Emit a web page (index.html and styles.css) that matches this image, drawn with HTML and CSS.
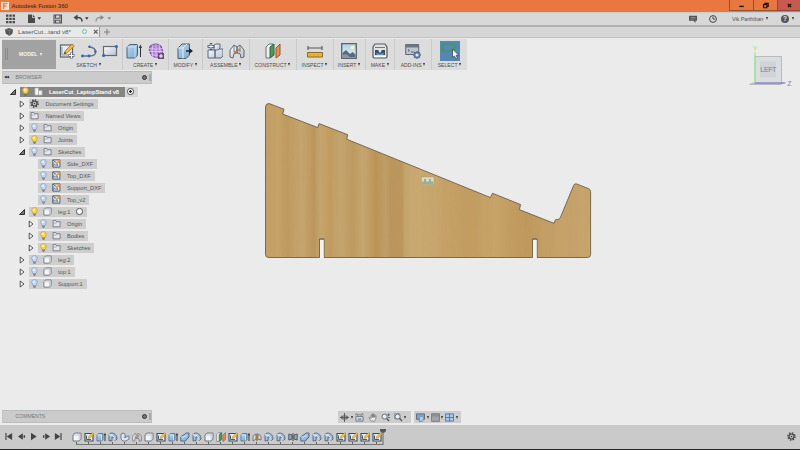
FILE: index.html
```html
<!DOCTYPE html>
<html lang="en">
<head>
<meta charset="utf-8">
<title>Autodesk Fusion 360</title>
<link rel="stylesheet" href="styles.css">
</head>
<body>
<svg class="defs" width="0" height="0" aria-hidden="true">
  <defs>
    <linearGradient id="blue" x1="0" y1="0" x2="1" y2="1"><stop offset="0" stop-color="#b5d6f0"/><stop offset="1" stop-color="#7fa9cf"/></linearGradient>
    <linearGradient id="pale" x1="0" y1="0" x2="1" y2="1"><stop offset="0" stop-color="#fafbfd"/><stop offset="1" stop-color="#b9c3d2"/></linearGradient>
    <linearGradient id="sky" x1="0" y1="0" x2="0" y2="1"><stop offset="0" stop-color="#a9d3ea"/><stop offset="1" stop-color="#eef3ee"/></linearGradient>
  </defs>
  <symbol id="i-sketch" viewBox="0 0 16 16"><rect x="1.500" y="2" width="12" height="12" fill="#e9edf2" stroke="#59616c" stroke-width="1.200"/><path d="M3 12V4M3 12h9" stroke="#8593a5" fill="none"/><path d="M5 11l1-3 7-7 2.300 2-7 7z" fill="#f0b93a" stroke="#82601c" stroke-width=".6"/><path d="M5 11l1-2 1.500 1.300z" fill="#333"/><path d="M12.500 9.500v6M9.500 12.500h6" stroke="#5b6370" stroke-width="2.600"/><path d="M12.500 10v5M10 12.500h5" stroke="#fff" stroke-width="1.200"/></symbol>
  <symbol id="i-line" viewBox="0 0 16 16"><path d="M1 13h8c8 0 7-8 0-9" fill="none" stroke="#68727d" stroke-width="1.400"/><g fill="#3167c4"><circle cx="1.400" cy="13" r="1.400"/><circle cx="8" cy="13" r="1.400"/><circle cx="14.400" cy="8.500" r="1.300"/><circle cx="8.500" cy="3.800" r="1.300"/></g></symbol>
  <symbol id="i-rect" viewBox="0 0 16 16"><rect x="1.500" y="3.500" width="13" height="9" fill="url(#pale)" stroke="#616973" stroke-width="1.200"/><circle cx="1.600" cy="12.500" r="1.600" fill="#3167c4"/><circle cx="14.400" cy="3.500" r="1.600" fill="#3167c4"/></symbol>
  <symbol id="i-extrude" viewBox="0 0 16 16"><path d="M1 4l3-2.500h7.500V12l-2.500 3H1z" fill="url(#blue)" stroke="#4c6480"/><path d="M1 4h8v11M9 4l2.500-2.500" fill="none" stroke="#dcecf8" stroke-width=".8"/><path d="M14.500 14V3" stroke="#333"/><path d="M12.800 5l1.700-3.500L16 5z" fill="#333"/></symbol>
  <symbol id="i-form" viewBox="0 0 16 16"><path d="M2 3q6-4 11 0 3 5 1 9-5 5-11 0-3-5-1-9z" fill="#b07fd6" stroke="#774a9c"/><path d="M5 1.500q-2 6 0 13M8 1v14M11 1.500q2 6 0 13M1 5.500q7 1.500 14 0M1 8.500h14M1 11.500q7 1.500 13 0" fill="none" stroke="#ead9f7" stroke-width=".7"/><path d="M10 10h6v6h-6z" fill="#654f79"/><path d="M13 11v4M11 13h4" stroke="#fff"/></symbol>
  <symbol id="i-modify" viewBox="0 0 16 16"><path d="M1 5l4-4h7.500v11L9 15.500H1z" fill="url(#blue)" stroke="#4b5c70"/><path d="M1 5h5v10.500M6 5l4-4" fill="none" stroke="#e8f4fc"/><path d="M9 8h4" stroke="#222" stroke-width="1.500"/><path d="M12 5l4 3-4 3z" fill="#222"/></symbol>
  <symbol id="i-component" viewBox="0 0 16 16"><path d="M1 7h7v8H1zM8 8l2-2h6v7l-2 2H8z" fill="url(#pale)" stroke="#596b80"/><path d="M7 2l2-1h4v4l-2 2H7z" fill="url(#pale)" stroke="#596b80"/><path d="M4 0v7M.5 3.500h7" stroke="#335c91" stroke-width="2.400"/><path d="M4 1v5M1.500 3.500h5" stroke="#fff" stroke-width=".9"/></symbol>
  <symbol id="i-joint" viewBox="0 0 16 16"><path d="M1 14V7l4-5 3 2v6l-3 .5L4 15zM15 14V7l-4-5-3 2v6l3 .5 1 4.500z" fill="url(#pale)" stroke="#5e6671"/><path d="M5 3v6M11 3v6" stroke="#73808e"/><circle cx="6" cy="9" r="1.300" fill="#e77b36"/><circle cx="10" cy="7" r="1.300" fill="#e77b36"/></symbol>
  <symbol id="i-plane" viewBox="0 0 16 16"><path d="M1 4l3-3h4v11l-3 3H1z" fill="#eef1f3" stroke="#68717a"/><path d="M5 4l4-3v11l-4 3z" fill="#52975b" stroke="#33633a"/><path d="M11 5l4-4v11l-4 3z" fill="#f18c50" stroke="#8d5639"/></symbol>
  <symbol id="i-measure" viewBox="0 0 16 16"><path d="M1 5h14M1 3v4M15 3v4" stroke="#555" fill="none" stroke-width="1.100"/><path d="M.5 9.500h15v4.500H.5z" fill="#efbd32" stroke="#8b671b"/><path d="M3 11v2M5 11v1M7 11v2M9 11v1M11 11v2M13 11v1" stroke="#a17823" stroke-width=".5"/></symbol>
  <symbol id="i-image" viewBox="0 0 16 16"><path d="M.7.7h14.600v14.600H.7z" fill="url(#sky)" stroke="#59646f" stroke-width="1.300"/><circle cx="11.500" cy="4.500" r="1.800" fill="#fff6b4"/><path d="M1.500 10L5 7l4 4 2.500-2 3 2.500v3h-13z" fill="#58697a"/><path d="M1.500 12l4-1 4 3.500h-8z" fill="#8797a4"/></symbol>
  <symbol id="i-make" viewBox="0 0 16 16"><path d="M3 1h10l2 3v10l-1 1H2l-1-1V4z" fill="#dfe3e6" stroke="#565c63" stroke-width="1.200"/><path d="M3 4.500h10" stroke="#777"/><path d="M3 7h10v5H3z" fill="#414a55"/><path d="M7 5h2l.6 3L8 10 6.400 8z" fill="#d9e7f4"/><path d="M4.500 9.500L8 11l3.500-1.500V12h-7z" fill="#5599d3"/><path d="M2 13.500h12" stroke="#fff"/></symbol>
  <symbol id="i-addins" viewBox="0 0 16 16"><path d="M.7 1.500h13v10H.7z" fill="#bdc5cf" stroke="#5e6876"/><path d="M.7 1.500h13v3H.7z" fill="#6c7684"/><path d="M3 6.500l1.500 1L3 8.500M6 9h3" fill="none" stroke="#46515f" stroke-width=".8"/><circle cx="12" cy="12" r="2.500" fill="#dfeaf4" stroke="#5b789c" stroke-width="1.800"/><path d="M12 8v1.500M12 14.500V16M8 12h1.500M14.500 12H16M9.200 9.200l1 1M13.800 13.800l1 1M14.800 9.200l-1 1M10.200 13.800l-1 1" stroke="#5b789c" stroke-width="1.300"/></symbol>
  <symbol id="i-select" viewBox="0 0 20 20"><path d="M2.500 3h12v7h-12z" fill="none" stroke="#3e9a50" stroke-width="1.200"/><path d="M12.500 8v8.500l2-1.500 1.400 3 1.600-.8-1.400-2.900 2.500-.3z" fill="#fff" stroke="#394955" stroke-width=".8"/></symbol>
  <symbol id="i-bulb" viewBox="0 0 10 10"><path d="M3.300 7.500C3.300 6 1.900 5.400 1.900 3.600a3.100 3.100 0 0 1 6.200 0C8.100 5.400 6.700 6 6.700 7.500z" fill="#c2d6f3" stroke="#8da1c0" stroke-width=".8"/><circle cx="4.200" cy="3.200" r="1.200" fill="#edf5ff"/><path d="M3.400 8h3.200M4 9.300h2" stroke="#6b7480" stroke-width="1"/></symbol>
  <symbol id="i-bulb-on" viewBox="0 0 10 10"><path d="M3.300 7.500C3.300 6 1.900 5.400 1.900 3.600a3.100 3.100 0 0 1 6.200 0C8.100 5.400 6.700 6 6.700 7.500z" fill="#f8d64b" stroke="#c3a542" stroke-width=".8"/><circle cx="4.200" cy="3.200" r="1.200" fill="#fff6bb"/><path d="M3.400 8h3.200M4 9.300h2" stroke="#666" stroke-width="1"/></symbol>
  <symbol id="i-folder" viewBox="0 0 10 10"><path d="M1.200 8.700V1.700h3l.8 1.300h4v5.700z" fill="#e4e7ec" stroke="#68707b" stroke-width=".9"/><path d="M1.200 4.500h3.500l.8-1" stroke="#8e96a1" stroke-width=".7" fill="none"/></symbol>
  <symbol id="i-box" viewBox="0 0 10 10"><path d="M1 3l1.800-1.900H9v6L7.200 9H1z" fill="#f5f6f7" stroke="#626a75" stroke-width=".9" stroke-linejoin="round"/><path d="M1.500 3h5.700v5.500M7.200 3L9 1.400" fill="none" stroke="#b3b8bf" stroke-width=".7"/></symbol>
  <symbol id="i-parts" viewBox="0 0 10 10"><path d="M1 1h4v8H1zM5 4h4v5H5z" fill="#f4f4f4" stroke="#a9a9a9" stroke-width=".7"/></symbol>
  <symbol id="i-gear" viewBox="0 0 10 10"><circle cx="5" cy="5" r="4" fill="none" stroke="#444" stroke-width="1.600" stroke-dasharray="1.570 1.570"/><circle cx="5" cy="5" r="2.800" fill="#c2c2c2" stroke="#444" stroke-width="1.300"/><circle cx="5" cy="5" r=".9" fill="#444"/></symbol>
  <symbol id="i-dxf" viewBox="0 0 10 10"><path d="M.8 1h8v8h-8z" fill="#e7edf3" stroke="#46505e" stroke-width="1"/><path d="M2 8V5l2 2 2-1v2M2 3h2" stroke="#4f6c91" fill="none"/><path d="M4 6l.6-2L8 .7l1.500 1.400L6 5.400z" fill="#ec993c"/><path d="M1 1l3 3" stroke="#cb4d3b"/></symbol>
  <symbol id="t-sketch" viewBox="0 0 10 10"><path d="M1 1.500h8V9H1z" fill="#e5ebf1" stroke="#414c5c" stroke-width="1.100"/><path d="M2.500 3.500v4H7" stroke="#425f83" fill="none"/><path d="M4 6.500l.7-2L8.500.7 10 2 6 6z" fill="#f5c62d" stroke="#9c7720" stroke-width=".4"/></symbol>
  <symbol id="t-extrude" viewBox="0 0 10 10"><path d="M1 3l1.500-1.500H7v6L5.500 9H1z" fill="url(#blue)" stroke="#506782" stroke-width=".8"/><path d="M1 3h4.500v5.500" fill="none" stroke="#e7f2fc" stroke-width=".7"/><path d="M9 9V2" stroke="#333"/><path d="M7.700 3.200L9 .8l1 2.400z" fill="#333"/></symbol>
  <symbol id="t-fillet" viewBox="0 0 10 10"><path d="M1 8.800V2.500L3 1c4 0 6 2.500 6 6L7.200 8.800C7.200 6 6 5 4 5v3.800z" fill="url(#blue)" stroke="#50627b" stroke-width=".9"/><path d="M1 2.800c4 0 6 2 6.200 5.500" fill="none" stroke="#f1f7fe"/></symbol>
  <symbol id="t-revolve" viewBox="0 0 10 10"><path d="M1 2l2-1 2 1v2.500L9 4v3L6 9H3L1 7z" fill="#dce4ec" stroke="#59697c" stroke-width=".8"/><path d="M4 5.500h2L7.500 4" fill="none" stroke="#6c91b8"/></symbol>
  <symbol id="t-combine" viewBox="0 0 10 10"><path d="M.8 5L3 3h1l2-2h3v4L7 7 5.500 9H.8z" fill="url(#blue)" stroke="#466080" stroke-width=".9"/><path d="M1 5h3l1-1h2" fill="none" stroke="#d3e7f8" stroke-width=".8"/></symbol>
  <symbol id="t-redjoint" viewBox="0 0 10 10"><path d="M1 4l3-2v5L1 9zM6 2l3 2v4L6 7z" fill="#d9dedb" stroke="#5b685f" stroke-width=".8"/><path d="M4 3l2-1v6l-2 1z" fill="#dc7652"/><path d="M5 1v8" stroke="#427a4d" stroke-width=".6"/></symbol>
  <symbol id="t-mirror" viewBox="0 0 10 10"><path d="M.8 2L4 3v4L.8 8zM9.200 2L6 3v4l3.200 1z" fill="#8fa9c2" stroke="#445160" stroke-width=".9"/><path d="M5 1v8" stroke="#444"/></symbol>
  <symbol id="i-zoom" viewBox="0 0 10 10"><circle cx="4" cy="4" r="2.800" fill="#e8eef2" stroke="#65717e" stroke-width="1.100"/><path d="M6.200 6.200L9 9" stroke="#555" stroke-width="1.500"/></symbol>
  <symbol id="i-play" viewBox="0 0 10 10"><path d="M2.200 .7L8.500 5 2.200 9.300z" fill="#444"/></symbol>
  <symbol id="i-open" viewBox="0 0 8 8"><path d="M6.500 1.500v5h-5z" fill="#777" stroke="#333"/></symbol>
  <symbol id="i-closed" viewBox="0 0 8 8"><path d="M2.200 1v6l3.800-3z" fill="#f7f7f7" stroke="#444" stroke-width=".9"/></symbol>
</svg>

<div class="app">
  <header class="titlebar">
    <svg class="logo" viewBox="0 0 8 8"><rect width="8" height="8" fill="#f3e6d8"/><path d="M2.500 7V1.500h4M2.500 4h3" stroke="#e48530" stroke-width="1.500" fill="none"/></svg>
    <span class="title">Autodesk Fusion 360</span>
    <div class="window-buttons">
      <span><svg viewBox="0 0 10 10"><path d="M2.500 6h5" stroke="#201008" stroke-width="1.500"/></svg></span>
      <span><svg viewBox="0 0 10 10"><path d="M2.800 4h3.700v3.500H2.800zM4.200 4V2.600H8v3.500H6.500" stroke="#201008" fill="none" stroke-width="1.200"/></svg></span>
      <span class="close"><svg viewBox="0 0 10 10"><path d="M3.200 3.300l3.600 3.600M6.800 3.300L3.200 6.900" stroke="#201008" stroke-width="1.300"/></svg></span>
    </div>
  </header>

  <div class="quickbar">
    <svg class="quick-icons" viewBox="0 0 112 13">
      <path d="M6 2.500h2.400v2.200H6zm3.300 0h2.400v2.200H9.300zm3.300 0H15v2.200h-2.400zM6 5.800h2.400V8H6zm3.300 0h2.400V8H9.300zm3.300 0H15V8h-2.400zM6 9h2.400v2.200H6zm3.300 0h2.400v2.200H9.300zm3.300 0H15v2.200h-2.400z" fill="#4a4a4a"/>
      <path d="M28 2.500h4v3.200h3V11h-7zM32.800 2.500L35 4.900h-2.200z" fill="#4a4a4a"/>
      <path d="M37.500 5.200h3.600l-1.800 2.600zM85 5.200h3.600l-1.800 2.600z" fill="#333"/>
      <path d="M54 3h7.500v8H54zM55.500 3v3.300H60V3M55.500 11V8.300H60V11" fill="none" stroke="#555" stroke-width="1.100"/>
      <path d="M77 5.500q5-.5 5 4" stroke="#444" stroke-width="1.600" fill="none"/><path d="M73.500 5.500L77.500 2.500v6z" fill="#444"/>
      <path d="M101 5.500q-5-.5-5 4" stroke="#999" stroke-width="1.500" fill="none"/><path d="M104 5.500L100.500 3v5zM107.500 5.200h3.600l-1.800 2.600z" fill="#888"/>
    </svg>
    <div class="account">
      <svg viewBox="0 0 8 8"><path d="M0 .8h8v5H6.500V8l-2-2.200H0z" fill="#555"/><path d="M1.500 2.500h5M1.500 4h5" stroke="#aaa" stroke-width=".6"/></svg>
      <svg viewBox="0 0 8 8"><circle cx="4" cy="4" r="3.400" fill="none" stroke="#444"/><path d="M4 1.700V4h2" fill="none" stroke="#444"/></svg>
      <span class="user">Vik Parthiban</span><i class="caret"></i>
      <span class="help">?</span><i class="caret"></i>
    </div>
  </div>

  <nav class="tabs">
    <div class="tab">
      <svg class="cube" viewBox="0 0 8 8"><path d="M0 1.500L4 0l4 1.500-.5 4L4.500 8 .7 5.500z" fill="#555"/><path d="M0 1.500l4.500 1L8 1.500M4.500 2.500V8" fill="none" stroke="#888" stroke-width=".6"/></svg>
      <span class="tab-name">LaserCut...tand v8*</span>
      <i class="status"></i>
      <svg class="x" viewBox="0 0 6 6"><path d="M1 1l4 4M5 1L1 5" stroke="#555" stroke-width="1.200"/></svg>
    </div>
    <svg class="plus" viewBox="0 0 6 6"><path d="M3 0v6M0 3h6" stroke="#777" stroke-width=".9"/></svg>
  </nav>

  <main class="stage">
    <section class="ribbon">
      <div class="workspace"><i class="grip"></i><span>MODEL</span><i class="caret"></i></div>
      <div class="group g-sketch"><div class="tools"><svg><use href="#i-sketch"/></svg><svg><use href="#i-line"/></svg><svg><use href="#i-rect"/></svg></div><div class="label">SKETCH<i class="caret"></i></div></div>
      <div class="group g-create"><div class="tools"><svg><use href="#i-extrude"/></svg><svg><use href="#i-form"/></svg></div><div class="label">CREATE<i class="caret"></i></div></div>
      <div class="group g-modify"><div class="tools"><svg><use href="#i-modify"/></svg></div><div class="label">MODIFY<i class="caret"></i></div></div>
      <div class="group g-assemble"><div class="tools"><svg><use href="#i-component"/></svg><svg><use href="#i-joint"/></svg></div><div class="label">ASSEMBLE<i class="caret"></i></div></div>
      <div class="group g-construct"><div class="tools"><svg><use href="#i-plane"/></svg></div><div class="label">CONSTRUCT<i class="caret"></i></div></div>
      <div class="group g-inspect"><div class="tools"><svg><use href="#i-measure"/></svg></div><div class="label">INSPECT<i class="caret"></i></div></div>
      <div class="group g-insert"><div class="tools"><svg><use href="#i-image"/></svg></div><div class="label">INSERT<i class="caret"></i></div></div>
      <div class="group g-make"><div class="tools"><svg><use href="#i-make"/></svg></div><div class="label">MAKE<i class="caret"></i></div></div>
      <div class="group g-addins"><div class="tools"><svg><use href="#i-addins"/></svg></div><div class="label">ADD-INS<i class="caret"></i></div></div>
      <div class="group g-select"><div class="tools"><svg class="active"><use href="#i-select"/></svg></div><div class="label">SELECT<i class="caret"></i></div></div>
    </section>

    <aside class="browser">
      <div class="panel-head"><span class="rewind">◀◀</span><span class="panel-name">BROWSER</span><i class="dot"></i><i class="handle"></i></div>
      <ul class="tree">
        <li class="root"><svg class="toggle"><use href="#i-open"/></svg><div class="item dark"><svg><use href="#i-bulb-on"/></svg><svg class="kind"><use href="#i-parts"/></svg><b>LaserCut_LaptopStand v8</b></div><div class="radio-cell"><i class="radio on"></i></div></li>
        <li><svg class="toggle"><use href="#i-closed"/></svg><div class="item single"><svg><use href="#i-gear"/></svg><span>Document Settings</span></div></li>
        <li><svg class="toggle"><use href="#i-closed"/></svg><div class="item single"><svg><use href="#i-folder"/></svg><span>Named Views</span></div></li>
        <li><svg class="toggle"><use href="#i-closed"/></svg><div class="item"><svg><use href="#i-bulb"/></svg><svg class="kind"><use href="#i-folder"/></svg><span>Origin</span></div></li>
        <li><svg class="toggle"><use href="#i-closed"/></svg><div class="item"><svg><use href="#i-bulb-on"/></svg><svg class="kind"><use href="#i-folder"/></svg><span>Joints</span></div></li>
        <li><svg class="toggle"><use href="#i-open"/></svg><div class="item"><svg><use href="#i-bulb"/></svg><svg class="kind"><use href="#i-folder"/></svg><span>Sketches</span></div></li>
        <li class="leaf"><div class="item"><svg><use href="#i-bulb"/></svg><svg class="kind"><use href="#i-dxf"/></svg><span>Side_DXF</span></div></li>
        <li class="leaf"><div class="item"><svg><use href="#i-bulb"/></svg><svg class="kind"><use href="#i-dxf"/></svg><span>Top_DXF</span></div></li>
        <li class="leaf"><div class="item"><svg><use href="#i-bulb"/></svg><svg class="kind"><use href="#i-dxf"/></svg><span>Support_DXF</span></div></li>
        <li class="leaf"><div class="item"><svg><use href="#i-bulb"/></svg><svg class="kind"><use href="#i-dxf"/></svg><span>Top_v2</span></div></li>
        <li><svg class="toggle"><use href="#i-open"/></svg><div class="item"><svg><use href="#i-bulb-on"/></svg><svg class="kind"><use href="#i-box"/></svg><span>leg:1</span><i class="radio"></i></div></li>
        <li class="sub"><svg class="toggle"><use href="#i-closed"/></svg><div class="item"><svg><use href="#i-bulb"/></svg><svg class="kind"><use href="#i-folder"/></svg><span>Origin</span></div></li>
        <li class="sub"><svg class="toggle"><use href="#i-closed"/></svg><div class="item"><svg><use href="#i-bulb-on"/></svg><svg class="kind"><use href="#i-folder"/></svg><span>Bodies</span></div></li>
        <li class="sub"><svg class="toggle"><use href="#i-closed"/></svg><div class="item"><svg><use href="#i-bulb-on"/></svg><svg class="kind"><use href="#i-folder"/></svg><span>Sketches</span></div></li>
        <li><svg class="toggle"><use href="#i-closed"/></svg><div class="item"><svg><use href="#i-bulb"/></svg><svg class="kind"><use href="#i-box"/></svg><span>leg:2</span></div></li>
        <li><svg class="toggle"><use href="#i-closed"/></svg><div class="item"><svg><use href="#i-bulb"/></svg><svg class="kind"><use href="#i-box"/></svg><span>top:1</span></div></li>
        <li><svg class="toggle"><use href="#i-closed"/></svg><div class="item"><svg><use href="#i-bulb"/></svg><svg class="kind"><use href="#i-box"/></svg><span>Support:1</span></div></li>
      </ul>
    </aside>

    <svg class="model" viewBox="260 98 336 164">
      <defs>
        <linearGradient id="wood" gradientUnits="userSpaceOnUse" x1="265" y1="0" x2="591" y2="0">
          <stop offset="0" stop-color="#c6a063"/><stop offset=".04" stop-color="#c5a268"/><stop offset=".07" stop-color="#bf9a60"/><stop offset=".11" stop-color="#c7a770"/><stop offset=".15" stop-color="#bb965c"/><stop offset=".17" stop-color="#c7a76f"/><stop offset=".2" stop-color="#c19b5f"/><stop offset=".23" stop-color="#c4a66f"/><stop offset=".27" stop-color="#bd9a60"/><stop offset=".3" stop-color="#c6a670"/><stop offset=".34" stop-color="#bb9358"/><stop offset=".37" stop-color="#c09f67"/><stop offset=".385" stop-color="#bb965c"/><stop offset=".42" stop-color="#bb965d"/><stop offset=".43" stop-color="#c8a870"/><stop offset=".5" stop-color="#c9a970"/><stop offset=".56" stop-color="#c7a266"/><stop offset=".63" stop-color="#c49d60"/><stop offset=".7" stop-color="#c8a468"/><stop offset=".8" stop-color="#c0985c"/><stop offset=".88" stop-color="#c6a167"/><stop offset="1" stop-color="#c7a56d"/>
        </linearGradient>
        <filter id="grain" x="0" y="0" width="100%" height="100%"><feTurbulence type="fractalNoise" baseFrequency=".13 .003" numOctaves="3" seed="7"/><feColorMatrix values="0 0 0 0 .5  0 0 0 0 .33  0 0 0 0 .14  2 0 0 0 -.85"/></filter>
        <path id="side" d="M265.500 107q0-3.500 3.500-3.500l15 5.700-1.300 4.900 35 13.400 1.400-3.900 28.600 11.100-1 4.500L490.300 197.500l2.200-4.200 28 11.200-1 5.200L554 223.300l1.500-3.600 2.500-.2q1.700-.4 2.600-2.500l13-31.500q.9-2.300 3-1.600l12 4.800q2 .8 2 3v62.800q0 3-3 3H537v-18.500h-4.500v18.500H324v-18.500h-4.500v18.500H268.500q-3 0-3-3z"/>
        <clipPath id="cut"><use href="#side"/></clipPath>
      </defs>
      <use href="#side" fill="url(#wood)"/>
      <g clip-path="url(#cut)"><rect x="265" y="103" width="327" height="156" filter="url(#grain)" opacity=".38"/></g>
      <use href="#side" fill="none" stroke="#5e533e" stroke-width=".8"/>
      <path d="M320 258V239.600h3.600V258M533 258V239.600h3.600V258" fill="#f2f2f2"/>
      <path d="M319.500 239.200h4.500M532.500 239.200h4.500" stroke="#5e533e" stroke-width=".8"/>
      <rect x="421.500" y="177" width="12.500" height="7.500" fill="#e2d8be" stroke="#a79a77" stroke-width=".5"/>
      <path d="M422 184v-2.500h2V179h2v2.500h3V179h2v2.500h2.500v2.500z" fill="#8fb39a"/>
    </svg>

    <svg class="viewcube" viewBox="0 0 50 46">
      <path d="M1 40l6-2h30l-4 3H2z" fill="#bbb"/>
      <rect x="7" y="12.500" width="26.500" height="26.500" fill="#dcdde0" stroke="#b0b1b4" stroke-width=".8"/>
      <rect x="12" y="17.500" width="16" height="16" fill="#d0d3d8"/>
      <path d="M7 8v31" stroke="#8bee83"/><path d="M7 39h30.500" stroke="#7373dc"/>
      <text x="20.200" y="28" class="face">LEFT</text><text x="7" y="6.500" class="axis-y">Y</text><text x="41.500" y="41.500" class="axis-z">Z</text>
    </svg>

    <div class="comments"><span class="panel-name">COMMENTS</span><i class="dot"></i><i class="handle"></i></div>

    <div class="navbar">
      <div class="nav-group nav-view">
        <svg viewBox="0 0 10 10"><path d="M5 0v10M0 5h10" stroke="#555"/><ellipse cx="5" cy="5" rx="4" ry="1.800" fill="none" stroke="#555" stroke-width="1.100"/></svg><i class="caret"></i>
        <svg viewBox="0 0 10 10"><path d="M1 4h8v5H1zM1 2.500V1h2M9 2.500V1H7M3 4V2h4v2" fill="#d8dde3" stroke="#6c747e"/><path d="M3 6h4v2H3z" fill="#8b95a1"/></svg>
        <svg viewBox="0 0 10 10"><path d="M3.500 9L1 5l1-.5L3.500 6V2h1.200v3V1h1.200v4l.3-3.500h1.200V5l.7-2h1L8.500 7l-1 2z" fill="#eee" stroke="#666" stroke-width=".7"/></svg>
        <svg viewBox="0 0 10 10"><use href="#i-zoom"/><path d="M7 2h3M8.500.5v3M7.500 5h2.500" stroke="#555" stroke-width=".9"/></svg>
        <svg viewBox="0 0 10 10"><path d="M.5.500h6v6h-6z" fill="#bcc5cd" stroke="#7c858e" stroke-width=".7"/><use href="#i-zoom"/></svg><i class="caret"></i>
      </div>
      <div class="nav-group nav-display">
        <svg viewBox="0 0 10 10"><path d="M.5 1h9v6h-9zM3 9h4" fill="#7ba5d4" stroke="#5a6572"/><path d="M4 4h4v5H4z" fill="#b7cfe6" stroke="#6384a6" stroke-width=".5"/></svg><i class="caret"></i>
        <svg viewBox="0 0 10 10"><path d="M.5.800h9v8.500h-9z" fill="#a1a5aa" stroke="#777"/><path d="M1 1.300h8V4H1z" fill="#898e94"/></svg><i class="caret"></i>
        <svg viewBox="0 0 10 10"><path d="M.5 1h9v8h-9z" fill="#a8c8ea" stroke="#4f75a3"/><path d="M5 1v8M.5 5h9" stroke="#4f75a3"/></svg><i class="caret"></i>
      </div>
    </div>
  </main>

  <footer class="timeline">
    <div class="transport">
      <svg viewBox="0 0 10 10"><path d="M2.200 1v8" stroke="#444" stroke-width="1.300"/><path d="M9 1v8L3 5z" fill="#444"/></svg>
      <svg viewBox="0 0 10 10"><path d="M6.500 1.500v7L1 5zM7.300 3.500h1.700v3H7.300z" fill="#444"/></svg>
      <svg viewBox="0 0 10 10"><use href="#i-play"/></svg>
      <svg viewBox="0 0 10 10"><path d="M3.500 1.500v7L9 5zM1 3.500h1.700v3H1z" fill="#444"/></svg>
      <svg viewBox="0 0 10 10"><path d="M7.800 1v8" stroke="#444" stroke-width="1.300"/><path d="M1 1v8l6-4z" fill="#444"/></svg>
    </div>
    <div class="track">
      <span><svg><use href="#i-box"/></svg></span><span><svg><use href="#t-sketch"/></svg></span><span><svg><use href="#t-extrude"/></svg></span><span><svg><use href="#t-fillet"/></svg></span><span><svg><use href="#t-revolve"/></svg></span><span><svg viewBox="0 0 16 16"><use href="#i-joint"/></svg></span><span><svg><use href="#i-box"/></svg></span><span><svg><use href="#t-sketch"/></svg></span><span><svg><use href="#t-extrude"/></svg></span><span><svg><use href="#t-combine"/></svg></span><span><svg><use href="#t-fillet"/></svg></span><span><svg><use href="#i-box"/></svg></span><span><svg viewBox="0 0 16 16"><use href="#i-plane"/></svg></span><span><svg><use href="#t-sketch"/></svg></span><span><svg><use href="#t-extrude"/></svg></span><span><svg><use href="#t-redjoint"/></svg></span><span><svg><use href="#t-fillet"/></svg></span><span><svg><use href="#t-fillet"/></svg></span><span><svg><use href="#t-mirror"/></svg></span><span><svg><use href="#t-combine"/></svg></span><span><svg><use href="#t-fillet"/></svg></span><span><svg><use href="#t-fillet"/></svg></span><span><svg><use href="#t-sketch"/></svg></span><span><svg><use href="#t-sketch"/></svg></span><span><svg><use href="#t-sketch"/></svg></span><span><svg><use href="#t-sketch"/></svg></span>
      <svg class="marker" viewBox="0 0 6 17"><path d="M0 0h6v2L4 4H2L0 2z" fill="#555"/><path d="M3 3v13" stroke="#777" stroke-width="1.200"/></svg>
    </div>
    <svg class="settings"><use href="#i-gear"/></svg>
  </footer>
</div>
</body>
</html>
```
FILE: styles.css
```css
* { box-sizing: border-box; }
body { margin: 0; font-family: "Liberation Sans", Arial, sans-serif; font-size: 5.7px; color: #555; }
svg { display: block; flex: none; }
.defs { position: absolute; }
.app { width: 800px; height: 450px; display: flex; flex-direction: column; background: #ebebeb; overflow: hidden; border-bottom: 1px solid #252525; }
.caret { flex: none; width: 0; height: 0; border: 1.8px solid transparent; border-top: 3px solid #333; border-bottom: 0; }

.titlebar { height: 11.5px; flex: none; display: flex; align-items: center; background: #e87740; padding-left: 1px; }
.logo { width: 8px; height: 8px; }
.title { margin-left: 2.5px; font-size: 6px; color: #2d1c14; white-space: nowrap; }
.window-buttons { margin-left: auto; display: flex; align-self: stretch; }
.window-buttons span { width: 24px; height: 11px; display: flex; justify-content: center; align-items: center; border: 1px solid #98502e; border-width: 0 0 1px 1px; }
.window-buttons svg { width: 9px; height: 9px; }
.window-buttons .close { width: 23px; background: #c75a50; border-color: #984338; }

.quickbar { height: 15px; flex: none; display: flex; align-items: center; justify-content: space-between; background: #d8d8d8; border-top: 1px solid #c6cdd0; border-bottom: 2px solid #b0b0b0; }
.quick-icons { width: 112px; height: 13px; }
.account { display: flex; align-items: center; padding-right: 6.500px; }
.account svg { width: 8px; height: 8px; margin-right: 12px; }
.account svg + svg { margin-right: 15px; }
.user { width: 31px; font-size: 5.500px; margin-right: 3px; white-space: nowrap; letter-spacing: -.1px; }
.help { width: 8px; height: 8px; border-radius: 50%; background: #555; color: #e5e5e5; font-weight: bold; font-size: 6.500px; line-height: 8px; text-align: center; margin: 0 2.500px 0 13px; }

.tabs { height: 11.500px; flex: none; display: flex; align-items: center; background: #d6d6d6; border-bottom: 1px solid #c2c2c2; }
.tab { width: 100px; height: 10.500px; display: flex; align-items: center; padding-left: 5px; background: #e9e9e9; border-right: 1px solid #999; }
.cube { width: 8px; height: 8px; }
.tab-name { width: 56px; margin-left: 5px; font-size: 6.200px; white-space: nowrap; }
.status { width: 5px; height: 5px; margin-left: 7.500px; border: 1px solid #77c2a2; border-radius: 50%; }
.x { width: 5.500px; height: 5.500px; margin-left: 6px; }
.plus { width: 6px; height: 6px; margin-left: 3.500px; }

.stage { position: relative; flex: 1; display: flex; flex-direction: column; align-items: flex-start; padding: 1px 0 2px 2px; }
.ribbon { display: flex; height: 31px; width: 465px; background: #dcdcdc; }
.workspace { width: 53.500px; height: 29.500px; margin-top: .5px; display: flex; align-items: center; background: #a2a2a2; color: #f4f4f4; font-size: 5.100px; font-weight: bold; }
.workspace .caret { border-top-color: #fff; margin-left: 3px; }
.grip { width: 3px; height: 12px; margin: 0 11px 0 3px; border: 1px solid #8a8a8a; border-width: 0 1px; }
.group { position: relative; display: flex; flex-direction: column; align-items: center; padding-top: 2px; }
.group:not(.g-select) { border-right: 1px solid #cbcbcb; }
.tools { height: 20px; display: flex; align-items: center; gap: 5.500px; }
.tools svg { width: 16px; height: 16px; }
.tools .active { width: 20px; height: 20px; background: #5686b2; }
.label { display: flex; align-items: center; gap: 1.800px; margin-top: .5px; font-size: 5.100px; line-height: 6px; color: #4c4c4c; }
.g-sketch { width: 67px; }
.g-create { width: 46px; }
.g-modify { width: 34.500px; }
.g-assemble { width: 46.500px; }
.g-construct { width: 47px; }
.g-inspect { width: 37px; }
.g-insert { width: 32px; }
.g-make { width: 29.500px; }
.g-addins { width: 37px; }
.g-select { width: 35px; }

.panel-head, .comments { display: flex; align-items: center; width: 150px; height: 12.500px; background: #cbcbcb; border: 1px solid #bcbcbc; border-left-color: #c5c5c5; }
.panel-head { margin-top: 1px; }
.rewind { width: 12.500px; padding-left: 1px; font-family: "DejaVu Sans", sans-serif; font-size: 3.600px; letter-spacing: -.4px; color: #333; }
.panel-name { font-size: 5.100px; color: #777; }
.dot { width: 5px; height: 5px; margin-left: auto; border: 1.500px solid #333; border-radius: 50%; background: #777; }
.handle { width: 2px; height: 7px; margin-left: 2.500px; border: 1px solid #aaa; border-width: 0 1px; }

.tree { list-style: none; margin: 2px 0 0; padding: 0; }
.tree li { display: flex; align-items: center; height: 12px; padding-left: 15.500px; }
.tree li.root { padding-left: 7px; }
.tree li.sub { padding-left: 24.500px; }
.tree li.leaf { padding-left: 36px; }
.toggle { width: 8px; height: 8px; margin-right: 3.500px; }
.item { display: flex; align-items: center; height: 10px; padding: 0 4px 0 .5px; background: #cecece; white-space: nowrap; }
.item svg:not(.toggle) { width: 9px; height: 9px; }
.item .kind { margin: 0 6.500px 0 4px; }
.item.single svg { margin-right: 7px; }
.root .toggle { margin-right: 3px; }
.item.dark { width: 105px; background: #858585; color: #fff; padding-right: 0; }
.item b { letter-spacing: -.02px; }
.radio-cell { width: 12.500px; height: 10px; display: flex; align-items: center; justify-content: center; background: #d6d6d6; }
.radio { width: 6.500px; height: 6.500px; border: 1px solid #555; border-radius: 50%; background: #fff; margin-left: 6px; }
.radio.on { margin: 0 2px 0 0; background: radial-gradient(#222 0 1px, #fff 1.500px); }

.model { position: absolute; left: 260px; top: 60px; width: 336px; height: 164px; }
.viewcube { position: absolute; left: 748px; top: 6px; width: 50px; height: 46px; }
.face { font-size: 6.400px; font-weight: bold; fill: #9298a0; text-anchor: middle; }
.axis-y, .axis-z { font-size: 7px; text-anchor: middle; }
.axis-y { fill: #86ef80; }
.axis-z { fill: #7777ed; }

.comments { margin-top: auto; padding-left: 12.500px; }
.navbar { position: absolute; left: 338px; top: 373px; display: flex; gap: 3px; }
.nav-group { height: 12px; display: flex; align-items: center; background: #cdcdcd; padding-left: 2px; }
.nav-view { width: 73px; }
.nav-display { width: 46.500px; }
.nav-group svg { width: 9px; height: 9px; margin-right: 4px; }
.nav-group svg:has(+ .caret) { margin-right: 1.500px; }
.nav-group .caret { margin-right: 2px; }

.timeline { height: 24.500px; flex: none; display: flex; align-items: center; background: #cacaca; padding-right: 4px; }
.transport { display: flex; gap: 3.600px; padding-left: 4px; }
.transport svg { width: 9px; height: 9px; }
.track { position: relative; display: flex; height: 18px; margin-left: 7.600px; }
.track span { position: relative; width: 12px; height: 17px; padding: 4px 0 0 1px; border-bottom: 1px solid #777; }
.track span::after { content: ""; position: absolute; left: 5px; bottom: 0; width: 1px; height: 2px; background: #666; }
.track span:first-child { width: 7px; margin-left: 5px; padding: 4px 0 0; }
.track span:first-child svg { margin-left: -4px; }
.track span:first-child::after { left: 0; }
.track span svg { width: 10px; height: 10px; }
.marker { position: absolute; left: 309px; top: 1px; width: 6px; height: 17px; }
.settings { width: 9px; height: 9px; margin-left: auto; }
```
